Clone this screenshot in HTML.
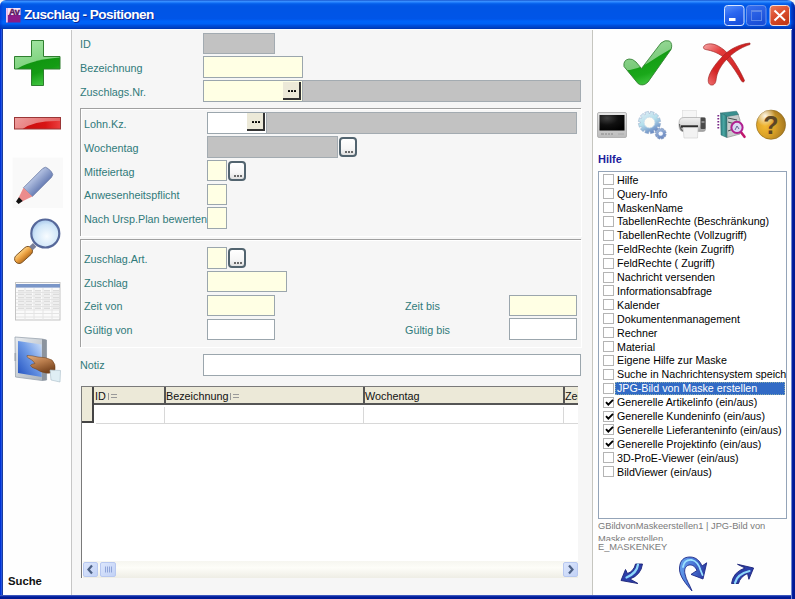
<!DOCTYPE html>
<html><head><meta charset="utf-8">
<style>
*{box-sizing:border-box}
html,body{margin:0;padding:0;width:795px;height:599px;overflow:hidden;background:#f4f4f4}
body{position:relative;font-family:"Liberation Sans",sans-serif;font-size:11px}
.a{position:absolute}
#title{left:0;top:0;width:795px;height:29px;border-radius:6px 8px 0 0;overflow:hidden;
background:linear-gradient(to bottom,#0a3fbf 0px,#3d95ff 1px,#2e86ff 2px,#0f6ef4 3px,#045de8 4px,#0055e5 6px,#0055e8 19px,#0063fa 21px,#0062f6 24px,#0050e0 25px,#0046cc 27px,#0036b0 29px)}
#frame{left:0;top:29px;width:795px;height:570px;background:linear-gradient(to right,#0032d6 0,#0032d6 1px,#2454e0 1px,#2454e0 2px,#1a3c9c 2px,#1a3c9c 3px,transparent 3px)}
#client{left:3px;top:29px;width:789px;height:566px;background:#f6f6f6}
.lab{position:absolute;color:#307a7a;font-size:10.8px;line-height:12px;white-space:nowrap}
.inp{position:absolute;border:1px solid #9ba6ad;background:#ffffe4}
.gray{background:#c2c2c2;border-color:#a3abb1}
.white{background:#fff}
.btn1{position:absolute;width:18px;height:18px;background:#ece9d8;border-right:2px solid #333;border-bottom:2px solid #333}
.btn1 i{position:absolute;top:7.5px;width:2.4px;height:2.4px;background:#000;border-radius:0.5px}
.btn1 i:nth-child(1){left:4.5px}.btn1 i:nth-child(2){left:7.7px}.btn1 i:nth-child(3){left:10.9px}
.btn2{position:absolute;width:18px;height:20px;border:2px solid #52646f;border-radius:4px;background:linear-gradient(#fff,#f6f6f6 60%,#e0e0e0)}
.btn2 i{position:absolute;top:11.5px;width:2px;height:2px;background:#6a6a6a}
.btn2 i:nth-child(1){left:4px}.btn2 i:nth-child(2){left:7px}.btn2 i:nth-child(3){left:10px}
.grp{position:absolute;border-top:1px solid #a0a0a0;border-left:1px solid #a0a0a0;box-shadow:inset 1px 1px 0 #fff, 1px 1px 0 #fff}
.li{position:absolute;left:3px;width:186px;height:13px;font-size:10.7px;line-height:13px;white-space:nowrap;color:#000}
.li span{position:absolute;left:13px;top:0;padding:0 2px 0 2px}
.li .cb{position:absolute;left:0.5px;top:0.5px;width:11px;height:11px;border:1px solid #b4b4b4;background:#fff}
.li .cb svg{position:absolute;left:1px;top:0px}
.li.sel span{background:#316ac5;color:#fff;width:170px;outline:1px dotted #8aa;outline-offset:-1px}
.gh{position:absolute;top:2px;font-size:10.8px;line-height:14px;color:#111;white-space:nowrap}
.gh .srt{display:inline-block;width:9px;height:7px;margin-left:2px;border-left:1px solid #999;position:relative;top:0px;background:linear-gradient(#999,#999) 2px 1px/6px 1px no-repeat,linear-gradient(#999,#999) 2px 4px/6px 1px no-repeat}
.sbb{position:absolute;width:15px;height:15px;border-radius:2px;border:1px solid #b8c8f0;background:linear-gradient(135deg,#dce6fc,#c2d2f6)}
.sbb svg{position:absolute;left:-1px;top:-1px}
</style></head><body>
<div id="title" class="a"><div class="a" style="right:0;top:0;width:4px;height:29px;background:linear-gradient(to right,rgba(0,30,160,0.3),rgba(0,24,150,0.85))"></div><div class="a" style="left:0;top:0;width:3px;height:29px;background:linear-gradient(to right,rgba(0,40,200,0.5),rgba(0,40,200,0))"></div></div>

<!-- title bar contents -->
<svg class="a" style="left:0;top:0" width="795" height="29" viewBox="0 0 795 29">
<defs>
<linearGradient id="gMin" x1="0" y1="0" x2="0.4" y2="1"><stop offset="0" stop-color="#5a92fc"/><stop offset="0.5" stop-color="#2a66f0"/><stop offset="1" stop-color="#1a52de"/></linearGradient>
<linearGradient id="gMax" x1="0" y1="0" x2="0.4" y2="1"><stop offset="0" stop-color="#3870f0"/><stop offset="1" stop-color="#1a4fd8"/></linearGradient>
<linearGradient id="gCls" x1="0" y1="0" x2="0.5" y2="1"><stop offset="0" stop-color="#ec7a58"/><stop offset="0.5" stop-color="#dc5030"/><stop offset="1" stop-color="#c43a18"/></linearGradient>
</defs>
<rect x="6" y="8" width="14.5" height="14.5" fill="#8a1c88"/>
<rect x="7.5" y="8" width="13" height="7" fill="#f8e4f8"/>
<rect x="6" y="8" width="1.8" height="14.5" fill="#f0c8f0"/>
<text x="14.3" y="14.6" text-anchor="middle" font-family="Liberation Sans" font-weight="bold" font-size="9" letter-spacing="-0.2" fill="#5a1860" stroke="#5a1860" stroke-width="0.45">Av</text>
<rect x="724.5" y="5.5" width="19.5" height="20" rx="3" fill="url(#gMin)" stroke="#d8e6ff" stroke-width="1"/>
<rect x="729" y="18" width="6.5" height="3" fill="#fff"/>
<rect x="746.5" y="5.5" width="19.5" height="20" rx="3" fill="url(#gMax)" stroke="#6a94ee" stroke-width="1"/>
<rect x="751.5" y="10.5" width="10" height="10" fill="none" stroke="#5e88e8" stroke-width="1"/>
<rect x="751.5" y="10" width="10" height="2" fill="#5e88e8"/>
<rect x="770" y="5.5" width="19.5" height="20" rx="3" fill="url(#gCls)" stroke="#f0e0dc" stroke-width="1"/>
<path d="M774.5,10.5 L785,20.5 M785,10.5 L774.5,20.5" stroke="#fff" stroke-width="2"/>
</svg>
<div class="a" style="left:24px;top:7px;font-weight:bold;font-size:13.6px;line-height:16px;letter-spacing:-0.55px;color:#fff;text-shadow:1px 1px 0 #0a2a9a;white-space:nowrap">Zuschlag - Positionen</div>
<div id="frame" class="a"></div>
<div id="client" class="a"></div>
<!-- left panel -->
<div class="a" style="left:3px;top:29px;width:789px;height:1px;background:#fcfdff;z-index:1"></div>
<div class="a" style="left:3px;top:29px;width:68px;height:566px;background:#fefefe"></div>
<div class="a" style="left:71px;top:29px;width:1px;height:566px;background:#c6c6c6"></div>
<!-- right panel -->
<div class="a" style="left:593px;top:29px;width:199px;height:566px;background:#fefefe"></div>
<div class="a" style="left:592px;top:29px;width:1px;height:566px;background:#c6c6c0"></div>
<!-- bottom frame -->
<div class="a" style="left:0;top:595px;width:795px;height:4px;background:linear-gradient(to bottom,#5a74c8 0,#1a36b0 1px,#001c98 2px,#001890 4px)"></div>
<div class="a" style="left:791px;top:29px;width:4px;height:570px;background:linear-gradient(to right,#7088d0 0,#7088d0 1px,#0828a8 1px,#001a98 2px,#001890 4px)"></div>


<!-- labels -->
<div class="lab" style="left:80px;top:38px">ID</div>
<div class="lab" style="left:80px;top:62px">Bezeichnung</div>
<div class="lab" style="left:80px;top:86px">Zuschlags.Nr.</div>

<div class="inp gray" style="left:203px;top:33px;width:72px;height:21px"></div>
<div class="inp" style="left:203px;top:56px;width:100px;height:22px"></div>
<div class="inp" style="left:203px;top:80px;width:100px;height:22px"></div>
<div class="inp gray" style="left:302px;top:80px;width:279px;height:22px"></div>
<div class="btn1" style="left:283px;top:82px"><i></i><i></i><i></i></div>

<!-- group 1 -->
<div class="grp" style="left:80px;top:108px;width:501px;height:128px"></div>
<div class="lab" style="left:84px;top:118px">Lohn.Kz.</div>
<div class="lab" style="left:84px;top:142px">Wochentag</div>
<div class="lab" style="left:84px;top:166px">Mitfeiertag</div>
<div class="lab" style="left:84px;top:189px">Anwesenheitspflicht</div>
<div class="lab" style="left:84px;top:213px">Nach Ursp.Plan bewerten</div>

<div class="inp white" style="left:207px;top:112px;width:60px;height:22px"></div>
<div class="btn1" style="left:247px;top:113px"><i></i><i></i><i></i></div>
<div class="inp gray" style="left:266px;top:112px;width:311px;height:22px"></div>
<div class="inp gray" style="left:207px;top:136px;width:131px;height:22px"></div>
<div class="btn2" style="left:339px;top:137px"><i></i><i></i><i></i></div>
<div class="inp" style="left:207px;top:160px;width:20px;height:21px"></div>
<div class="btn2" style="left:228px;top:161px"><i></i><i></i><i></i></div>
<div class="inp" style="left:207px;top:184px;width:20px;height:21px"></div>
<div class="inp" style="left:207px;top:207px;width:20px;height:22px"></div>

<!-- group 2 -->
<div class="grp" style="left:80px;top:239px;width:501px;height:108px"></div>
<div class="lab" style="left:84px;top:253px">Zuschlag.Art.</div>
<div class="lab" style="left:84px;top:277px">Zuschlag</div>
<div class="lab" style="left:84px;top:300px">Zeit von</div>
<div class="lab" style="left:84px;top:324px">G&uuml;ltig von</div>
<div class="lab" style="left:405px;top:300px">Zeit bis</div>
<div class="lab" style="left:405px;top:324px">G&uuml;ltig bis</div>

<div class="inp" style="left:207px;top:247px;width:20px;height:22px"></div>
<div class="btn2" style="left:228px;top:248px"><i></i><i></i><i></i></div>
<div class="inp" style="left:207px;top:271px;width:80px;height:21px"></div>
<div class="inp" style="left:207px;top:295px;width:68px;height:21px"></div>
<div class="inp white" style="left:207px;top:319px;width:68px;height:21px"></div>
<div class="inp" style="left:509px;top:295px;width:68px;height:21px"></div>
<div class="inp white" style="left:509px;top:318px;width:68px;height:22px"></div>

<div class="lab" style="left:80px;top:359px">Notiz</div>
<div class="inp white" style="left:203px;top:354px;width:378px;height:22px"></div>


<!-- grid -->
<div class="a" style="left:81px;top:386px;width:497px;height:192px;background:#fff;border-left:1px solid #7a7a7a;border-top:1px solid #7a7a7a;overflow:hidden">
 <div class="a" style="left:0;top:0;width:500px;height:18px;background:#ece9d8;border-bottom:2px solid #555"></div>
 <div class="a" style="left:0;top:0;width:12px;height:36px;background:#ece9d8;border-right:2px solid #444;border-bottom:2px solid #444"></div>
 <div class="a" style="left:82px;top:0;width:2px;height:18px;background:#555"></div>
 <div class="a" style="left:281px;top:0;width:2px;height:18px;background:#555"></div>
 <div class="a" style="left:481px;top:0;width:2px;height:18px;background:#555"></div>
 <div class="gh" style="left:13px">ID<i class="srt"></i></div>
 <div class="gh" style="left:84px">Bezeichnung<i class="srt"></i></div>
 <div class="gh" style="left:283px">Wochentag</div>
 <div class="gh" style="left:483px">Zeit</div>
 <div class="a" style="left:14px;top:36px;width:490px;height:1px;background:#d8d8d8"></div>
 <div class="a" style="left:82px;top:20px;width:1px;height:16px;background:#d8d8d8"></div>
 <div class="a" style="left:281px;top:20px;width:1px;height:16px;background:#d8d8d8"></div>
 <div class="a" style="left:481px;top:20px;width:1px;height:16px;background:#d8d8d8"></div>
 <!-- hscroll -->
 <div class="a" style="left:1px;top:174px;width:497px;height:17px;background:linear-gradient(#f6f6f0,#fdfdf8 40%,#eeede5)"></div>
 <div class="sbb" style="left:1px;top:175px"><svg width="15" height="15" viewBox="0 0 15 15"><path d="M9,3.5 L5.5,7.5 L9,11.5" fill="none" stroke="#4d6185" stroke-width="2.2"/></svg></div>
 <div class="sbb" style="left:18px;top:175px;width:16px"><svg width="16" height="15" viewBox="0 0 16 15"><path d="M5.5,4.5V10.5M7.5,4.5V10.5M9.5,4.5V10.5M11.5,4.5V10.5" stroke="#8fa4d8" stroke-width="1"/></svg></div>
 <div class="sbb" style="left:481px;top:175px"><svg width="15" height="15" viewBox="0 0 15 15"><path d="M6,3.5 L9.5,7.5 L6,11.5" fill="none" stroke="#4d6185" stroke-width="2.2"/></svg></div>
</div>
<!-- left icons -->
<svg class="a" style="left:0;top:0" width="72" height="599" viewBox="0 0 72 599">
<defs>
<linearGradient id="gP1" x1="0" y1="0" x2="1" y2="1"><stop offset="0" stop-color="#a6e6a6"/><stop offset="0.45" stop-color="#5cc65c"/><stop offset="0.5" stop-color="#189a18"/><stop offset="1" stop-color="#2ec02e"/></linearGradient>
<linearGradient id="gM1" x1="0" y1="0" x2="1" y2="1"><stop offset="0" stop-color="#f0a0a0"/><stop offset="0.4" stop-color="#e06868"/><stop offset="0.5" stop-color="#d41010"/><stop offset="1" stop-color="#e83030"/></linearGradient>
<linearGradient id="gPen" x1="0" y1="0" x2="0" y2="1"><stop offset="0" stop-color="#b4c2e2"/><stop offset="1" stop-color="#6a7fb6"/></linearGradient>
<radialGradient id="gLens" cx="0.4" cy="0.35" r="0.7"><stop offset="0" stop-color="#f4faff"/><stop offset="0.6" stop-color="#c0dcf4"/><stop offset="1" stop-color="#90b8e0"/></radialGradient>
<linearGradient id="gHand" x1="0" y1="0" x2="0" y2="1"><stop offset="0" stop-color="#f8c060"/><stop offset="1" stop-color="#c07828"/></linearGradient>
<linearGradient id="gScr" x1="0" y1="0" x2="1" y2="1"><stop offset="0" stop-color="#9ec0f0"/><stop offset="0.5" stop-color="#4c86e0"/><stop offset="1" stop-color="#1848c0"/></linearGradient>
</defs>
<!-- plus -->
<clipPath id="cpP"><path d="M31.5,40.5 h12 v16 h16.5 v12.5 h-16.5 v16.5 h-12 v-16.5 h-17 v-12.5 h17 z"/></clipPath>
<clipPath id="cpM"><rect x="14.5" y="117.5" width="46" height="11.5"/></clipPath>
<linearGradient id="gPt" x1="0" y1="0" x2="0.3" y2="1"><stop offset="0" stop-color="#a8e8a8"/><stop offset="1" stop-color="#62c462"/></linearGradient>
<linearGradient id="gPb" x1="0" y1="0" x2="0.6" y2="1"><stop offset="0" stop-color="#0c8e0c"/><stop offset="0.6" stop-color="#149c14"/><stop offset="1" stop-color="#48cc48"/></linearGradient>
<linearGradient id="gMt" x1="0" y1="0" x2="1" y2="0.3"><stop offset="0" stop-color="#eea0a0"/><stop offset="1" stop-color="#e46464"/></linearGradient>
<linearGradient id="gMb" x1="0" y1="0" x2="1" y2="0"><stop offset="0" stop-color="#c80c0c"/><stop offset="0.6" stop-color="#d81414"/><stop offset="1" stop-color="#ec4040"/></linearGradient>
<g clip-path="url(#cpP)">
<rect x="14" y="40" width="47" height="47" fill="url(#gPt)"/>
<path d="M14,71 Q28,60 61,57.5 L61,87 L14,87 Z" fill="url(#gPb)"/>
</g>
<path d="M31.5,40.5 h12 v16 h16.5 v12.5 h-16.5 v16.5 h-12 v-16.5 h-17 v-12.5 h17 z" fill="none" stroke="#2f7f2f" stroke-width="1"/>
<!-- minus -->
<g clip-path="url(#cpM)">
<rect x="14" y="117" width="47" height="12" fill="url(#gMt)"/>
<path d="M22,129.5 Q34,120 61,121 L61,130 Z" fill="url(#gMb)"/>
</g>
<rect x="14.5" y="117.5" width="46" height="11.5" fill="none" stroke="#9a3636" stroke-width="1"/>
<!-- pencil -->
<rect x="12.5" y="157.5" width="50.5" height="50.5" fill="#f9f9f9"/>
<g transform="translate(18,202) rotate(-45)">
<path d="M14,-6.2 L41,-6.2 Q45,-6.2 45,-2 L45,2 Q45,6.2 41,6.2 L14,6.2 Z" fill="url(#gPen)" stroke="#7080a8" stroke-width="0.8"/>
<path d="M1,-1.8 L14,-6.2 L14,6.2 L1,1.8 Z" fill="#ec8c8c"/>
<path d="M-1,-1.8 L4,-2.6 L4,2.6 L-1,1.8 Z" fill="#111"/>
</g>
<!-- magnifier -->
<linearGradient id="gHand2" x1="0" y1="0" x2="0" y2="1"><stop offset="0" stop-color="#fcd080"/><stop offset="0.5" stop-color="#eba040"/><stop offset="1" stop-color="#b87020"/></linearGradient>
<radialGradient id="gLens2" cx="0.55" cy="0.6" r="0.6"><stop offset="0" stop-color="#f8fcff"/><stop offset="0.7" stop-color="#d0e6f8"/><stop offset="1" stop-color="#a8c8ec"/></radialGradient>
<g transform="translate(24.3,254.3) rotate(-42)"><rect x="-11.5" y="-4.6" width="21" height="9.2" rx="4.6" fill="url(#gHand2)" stroke="#7a5020" stroke-width="0.9"/><rect x="9" y="-2.5" width="5" height="5" fill="#7a7f98"/></g>
<circle cx="45.3" cy="233.5" r="14" fill="url(#gLens2)" stroke="#56689a" stroke-width="2.2"/>
<!-- table -->
<rect x="15.5" y="282.5" width="44.5" height="37.5" fill="#fafafa" stroke="#c4c4c4" stroke-width="1"/>
<rect x="16" y="284" width="44" height="3.6" fill="#7a96c8"/>
<g fill="#dcdcdc">
<path d="M18,290h6v1.4h-6zM26,290h6v1.4h-6zM35,290h6v1.4h-6zM44,290h6v1.4h-6zM53,290h6v1.4h-6z"/>
<path d="M18,293.5h6v1.4h-6zM26,293.5h6v1.4h-6zM35,293.5h6v1.4h-6zM44,293.5h6v1.4h-6zM53,293.5h6v1.4h-6z"/>
<path d="M18,297h6v1.4h-6zM26,297h6v1.4h-6zM35,297h6v1.4h-6zM44,297h6v1.4h-6zM53,297h6v1.4h-6z"/>
<path d="M18,300.5h6v1.4h-6zM26,300.5h6v1.4h-6zM35,300.5h6v1.4h-6zM44,300.5h6v1.4h-6zM53,300.5h6v1.4h-6z"/>
<path d="M18,304h6v1.4h-6zM26,304h6v1.4h-6zM35,304h6v1.4h-6zM44,304h6v1.4h-6zM53,304h6v1.4h-6z"/>
<path d="M18,307.5h6v1.4h-6zM26,307.5h6v1.4h-6zM35,307.5h6v1.4h-6zM44,307.5h6v1.4h-6zM53,307.5h6v1.4h-6z"/>
</g>
<g stroke="#e4e4e4" stroke-width="1" fill="none">
<path d="M16,292.5 H60 M16,296 H60 M16,299.5 H60 M16,303 H60 M16,306.5 H60 M16,310 H60 M16,313.5 H60 M16,317 H60"/>
<path d="M25,288 V320 M34,288 V320 M43,288 V320 M52,288 V320"/>
</g>
<!-- touch screen -->
<linearGradient id="gFrame" x1="0" y1="0" x2="1" y2="1"><stop offset="0" stop-color="#e8ecf0"/><stop offset="1" stop-color="#a8b0b8"/></linearGradient>
<linearGradient id="gScr2" x1="1" y1="0" x2="0" y2="1"><stop offset="0" stop-color="#d0e2fa"/><stop offset="0.45" stop-color="#6e9ae6"/><stop offset="1" stop-color="#2050c0"/></linearGradient>
<linearGradient id="gSkin" x1="0" y1="0" x2="0.5" y2="1"><stop offset="0" stop-color="#e4b080"/><stop offset="0.5" stop-color="#b87c4c"/><stop offset="1" stop-color="#7a4620"/></linearGradient>
<path d="M15,337 L42,339 L46.5,340 L46.6,380 L42,380.5 L15.5,377 Z" fill="url(#gFrame)" stroke="#9aa4b0" stroke-width="0.8"/>
<path d="M42,339 L46.5,340 L46.6,380 L42,380.5 Z" fill="#8c949e"/>
<rect x="14.5" y="353" width="1.6" height="8" fill="#a0a8b0"/>
<path d="M18,341 L41.6,344.5 L41.6,377 L18,373 Z" fill="url(#gScr2)"/>
<path d="M27,355.5 Q32,355.5 38,357 Q46,357 52,360 Q56,364 55,370 Q52,374 46,373 Q40,372 36,369 Q31,367.5 30.5,365.5 Q31,364 35,363.5 Q33,360 28.5,358 Q26.5,357 27,355.5 Z" fill="url(#gSkin)" stroke="#6a3c18" stroke-width="0.5"/>
<path d="M50,370 L60.5,370.5 L60,382 L51,380 Z" fill="#dfeef4" stroke="#a8bcc8" stroke-width="0.6"/>
</svg>
<div class="a" style="left:8px;top:575px;font-weight:bold;font-size:11.3px;line-height:12px;color:#111">Suche</div>

<!-- right panel -->
<div class="a" style="left:598px;top:153px;font-weight:bold;font-size:11px;line-height:12px;color:#1c1c9c">Hilfe</div>
<div class="a" style="left:598px;top:171px;width:189px;height:348px;border:1px solid #94a4b8;background:#fff;overflow:hidden">
<div class="li" style="top:1.7px"><b class="cb"></b><span>Hilfe</span></div>
<div class="li" style="top:15.6px"><b class="cb"></b><span>Query-Info</span></div>
<div class="li" style="top:29.5px"><b class="cb"></b><span>MaskenName</span></div>
<div class="li" style="top:43.4px"><b class="cb"></b><span>TabellenRechte (Beschr&auml;nkung)</span></div>
<div class="li" style="top:57.3px"><b class="cb"></b><span>TabellenRechte (Vollzugriff)</span></div>
<div class="li" style="top:71.2px"><b class="cb"></b><span>FeldRechte (kein Zugriff)</span></div>
<div class="li" style="top:85.1px"><b class="cb"></b><span>FeldRechte ( Zugriff)</span></div>
<div class="li" style="top:99.0px"><b class="cb"></b><span>Nachricht versenden</span></div>
<div class="li" style="top:112.9px"><b class="cb"></b><span>Informationsabfrage</span></div>
<div class="li" style="top:126.8px"><b class="cb"></b><span>Kalender</span></div>
<div class="li" style="top:140.7px"><b class="cb"></b><span>Dokumentenmanagement</span></div>
<div class="li" style="top:154.6px"><b class="cb"></b><span>Rechner</span></div>
<div class="li" style="top:168.5px"><b class="cb"></b><span>Material</span></div>
<div class="li" style="top:182.4px"><b class="cb"></b><span>Eigene Hilfe zur Maske</span></div>
<div class="li" style="top:196.3px"><b class="cb"></b><span>Suche in Nachrichtensystem speichern</span></div>
<div class="li sel" style="top:210.2px"><b class="cb"></b><span>JPG-Bild von Maske erstellen</span></div>
<div class="li" style="top:224.1px"><b class="cb"><svg width="9" height="9" viewBox="0 0 9 9"><path d="M1,4.2 L3.3,6.6 L8,1.8" fill="none" stroke="#000" stroke-width="1.9"/></svg></b><span>Generelle Artikelinfo (ein/aus)</span></div>
<div class="li" style="top:238.0px"><b class="cb"><svg width="9" height="9" viewBox="0 0 9 9"><path d="M1,4.2 L3.3,6.6 L8,1.8" fill="none" stroke="#000" stroke-width="1.9"/></svg></b><span>Generelle Kundeninfo (ein/aus)</span></div>
<div class="li" style="top:251.9px"><b class="cb"><svg width="9" height="9" viewBox="0 0 9 9"><path d="M1,4.2 L3.3,6.6 L8,1.8" fill="none" stroke="#000" stroke-width="1.9"/></svg></b><span>Generelle Lieferanteninfo (ein/aus)</span></div>
<div class="li" style="top:265.8px"><b class="cb"><svg width="9" height="9" viewBox="0 0 9 9"><path d="M1,4.2 L3.3,6.6 L8,1.8" fill="none" stroke="#000" stroke-width="1.9"/></svg></b><span>Generelle Projektinfo (ein/aus)</span></div>
<div class="li" style="top:279.7px"><b class="cb"></b><span>3D-ProE-Viewer (ein/aus)</span></div>
<div class="li" style="top:293.6px"><b class="cb"></b><span>BildViewer (ein/aus)</span></div>
</div>
<div class="a" style="left:598px;top:520px;width:190px;height:21px;overflow:hidden;font-size:9.3px;line-height:13px;color:#7a7a7a">GBildvonMaskeerstellen1 | JPG-Bild von Maske erstellen</div>
<div class="a" style="left:598px;top:541px;font-size:9.3px;line-height:12px;color:#7a7a7a">E_MASKENKEY</div>

<!-- right icons -->
<svg class="a" style="left:593px;top:29px" width="199" height="566" viewBox="593 29 199 566">
<defs>
<linearGradient id="gCk" x1="0" y1="0" x2="0.3" y2="1"><stop offset="0" stop-color="#a8e0a8"/><stop offset="1" stop-color="#5cbc5c"/></linearGradient>
<linearGradient id="gCkb" x1="0" y1="0" x2="0.4" y2="1"><stop offset="0" stop-color="#0c8c0c"/><stop offset="0.7" stop-color="#1aa81a"/><stop offset="1" stop-color="#50d050"/></linearGradient>
<linearGradient id="gX" x1="0" y1="0" x2="1" y2="1"><stop offset="0" stop-color="#f4a0a0"/><stop offset="0.35" stop-color="#e03030"/><stop offset="1" stop-color="#c81818"/></linearGradient>
<clipPath id="cpCk"><path id="ckp" d="M624,66.5 Q623,60 629,59 Q632.5,58.5 636,62 L641.5,68.5 L661,43 Q665,39.5 669.5,41 Q673,44 671,49.5 L648,82 Q643,87 638,83.5 Z"/></clipPath>
<linearGradient id="gMon" x1="0" y1="0" x2="0" y2="1"><stop offset="0" stop-color="#e6e6e6"/><stop offset="1" stop-color="#bcbcbc"/></linearGradient>
<radialGradient id="gScrM" cx="0.3" cy="0.2" r="0.9"><stop offset="0" stop-color="#404040"/><stop offset="0.5" stop-color="#101010"/><stop offset="1" stop-color="#000"/></radialGradient>
<linearGradient id="gGear" x1="0" y1="0" x2="1" y2="1"><stop offset="0" stop-color="#e4f4fc"/><stop offset="0.5" stop-color="#a8d4f0"/><stop offset="1" stop-color="#6a92cc"/></linearGradient>
<radialGradient id="gHelp" cx="0.3" cy="0.55" r="0.8" fx="0.3" fy="0.55"><stop offset="0" stop-color="#f4b830"/><stop offset="0.45" stop-color="#d8a028"/><stop offset="0.85" stop-color="#a87a20"/><stop offset="1" stop-color="#80601c"/></radialGradient><radialGradient id="gHelpHi" cx="0.3" cy="0.2" r="0.35"><stop offset="0" stop-color="#fff" stop-opacity="0.9"/><stop offset="1" stop-color="#fff" stop-opacity="0"/></radialGradient>
<linearGradient id="gPr" x1="0" y1="0" x2="0" y2="1"><stop offset="0" stop-color="#f4f4f4"/><stop offset="1" stop-color="#a8a8a8"/></linearGradient>
<linearGradient id="gArr" x1="0" y1="0" x2="1" y2="1"><stop offset="0" stop-color="#a8e4fc"/><stop offset="1" stop-color="#58a8ec"/></linearGradient>
</defs>
<!-- check -->
<g clip-path="url(#cpCk)">
<rect x="620" y="38" width="55" height="50" fill="url(#gCk)"/>
<path d="M620,70.5 Q636,71 648,63 Q660,55 676,46 L676,90 L620,90 Z" fill="url(#gCkb)"/>
</g>
<use href="#ckp" fill="none" stroke="#3a863a" stroke-width="0.9"/>
<!-- X -->
<linearGradient id="gX2" x1="0" y1="0" x2="1" y2="1"><stop offset="0" stop-color="#f6a8a8"/><stop offset="0.3" stop-color="#e43c3c"/><stop offset="1" stop-color="#cc1c1c"/></linearGradient>
<linearGradient id="gX3" x1="1" y1="0" x2="0" y2="1"><stop offset="0" stop-color="#d02020"/><stop offset="0.75" stop-color="#d42424"/><stop offset="1" stop-color="#f07070"/></linearGradient>
<path d="M703.5,47 C705,43.5 711,43 716,45 C724,48.5 730,55 735,63 C739,69 742,75 744.5,80.5 C744,82.5 742.5,82.5 741.5,81 C737,73 733,67 728,61 C722,55 715,51.5 708,50 C705,49.5 703,49 703.5,47 Z" fill="url(#gX2)" stroke="#a02828" stroke-width="0.7"/>
<path d="M750,43 C740,44 730,49 724,55 C716,63 710,71 708.5,78 C707.5,83 709.5,85.5 712.5,85 C715.5,84.5 716,81 716.5,77 C718,70 722,64 728,58 C736,50 744,46.5 750,44.5 Z" fill="url(#gX3)" stroke="#a02828" stroke-width="0.7"/>
<!-- monitor -->
<rect x="597.5" y="112.5" width="29" height="25" rx="1.5" fill="url(#gMon)" stroke="#a8a8a8" stroke-width="0.8"/>
<rect x="599.5" y="115" width="25" height="15.5" fill="url(#gScrM)"/>
<path d="M601,134h3M605,134h2M608,134h2M611,134h2" stroke="#888" stroke-width="1"/>
<path d="M618,134h6" stroke="#aaa" stroke-width="1"/>
<!-- gears -->
<linearGradient id="gGear2" x1="0" y1="0" x2="0.5" y2="1"><stop offset="0" stop-color="#e8eef6"/><stop offset="0.55" stop-color="#b4e0ec"/><stop offset="1" stop-color="#6c8cc4"/></linearGradient>
<linearGradient id="gGear3" x1="0" y1="0" x2="0.5" y2="1"><stop offset="0" stop-color="#a8c0e0"/><stop offset="1" stop-color="#6a88c0"/></linearGradient>
<path d="M658.50,122.50 L658.49,122.97 L660.66,123.50 L659.66,127.22 L657.52,126.59 L657.29,127.00 L657.05,127.40 L658.66,128.94 L655.94,131.66 L654.40,130.05 L654.00,130.29 L653.59,130.52 L654.22,132.66 L650.50,133.66 L649.97,131.49 L649.50,131.50 L649.03,131.49 L648.50,133.66 L644.78,132.66 L645.41,130.52 L645.00,130.29 L644.60,130.05 L643.06,131.66 L640.34,128.94 L641.95,127.40 L641.71,127.00 L641.48,126.59 L639.34,127.22 L638.34,123.50 L640.51,122.97 L640.50,122.50 L640.51,122.03 L638.34,121.50 L639.34,117.78 L641.48,118.41 L641.71,118.00 L641.95,117.60 L640.34,116.06 L643.06,113.34 L644.60,114.95 L645.00,114.71 L645.41,114.48 L644.78,112.34 L648.50,111.34 L649.03,113.51 L649.50,113.50 L649.97,113.51 L650.50,111.34 L654.22,112.34 L653.59,114.48 L654.00,114.71 L654.40,114.95 L655.94,113.34 L658.66,116.06 L657.05,117.60 L657.29,118.00 L657.52,118.41 L659.66,117.78 L660.66,121.50 L658.49,122.03 Z" fill="url(#gGear2)" stroke="#90a8c8" stroke-width="0.5"/>
<circle cx="649.5" cy="122.5" r="5.4" fill="#fefcf4" stroke="#c8dcec" stroke-width="0.8"/>
<path d="M665.00,133.60 L664.99,133.94 L666.25,134.35 L665.15,137.00 L663.97,136.39 L663.74,136.64 L663.49,136.87 L664.10,138.05 L661.45,139.15 L661.04,137.89 L660.70,137.90 L660.36,137.89 L659.95,139.15 L657.30,138.05 L657.91,136.87 L657.66,136.64 L657.43,136.39 L656.25,137.00 L655.15,134.35 L656.41,133.94 L656.40,133.60 L656.41,133.26 L655.15,132.85 L656.25,130.20 L657.43,130.81 L657.66,130.56 L657.91,130.33 L657.30,129.15 L659.95,128.05 L660.36,129.31 L660.70,129.30 L661.04,129.31 L661.45,128.05 L664.10,129.15 L663.49,130.33 L663.74,130.56 L663.97,130.81 L665.15,130.20 L666.25,132.85 L664.99,133.26 Z" fill="url(#gGear3)" stroke="#7890b8" stroke-width="0.5"/>
<circle cx="660.7" cy="133.6" r="2.2" fill="#f4f8ff"/>
<!-- printer -->
<linearGradient id="gPr2" x1="0" y1="0" x2="0" y2="1"><stop offset="0" stop-color="#f0f0f0"/><stop offset="0.5" stop-color="#dcdcdc"/><stop offset="1" stop-color="#9a9a9a"/></linearGradient>
<rect x="682.5" y="110.5" width="14" height="8" fill="#f6f6f6" stroke="#dadada" stroke-width="0.6"/>
<path d="M679,123 Q679,117.5 684,117.5 L702,117.5 Q705.5,117.5 705.5,120 L705.5,129 Q705.5,131.5 703,131.5 L684,131.5 Q679,131.5 679,126 Z" fill="url(#gPr2)" stroke="#9c9c9c" stroke-width="0.6"/>
<path d="M679.5,124 Q680,129 683,131" fill="none" stroke="#606060" stroke-width="1.2"/>
<rect x="700.5" y="117.5" width="5" height="11.5" rx="1" fill="#4a4a4a"/>
<rect x="701.5" y="121" width="3" height="2" fill="#8a8a8a"/>
<rect x="681" y="125.3" width="17" height="2.4" fill="#2c2c2c"/>
<path d="M683,127.6 L698,127.6 L697.5,138 L684,138 Z" fill="#f2f2f2" stroke="#cfcfcf" stroke-width="0.6"/>
<!-- binder -->
<linearGradient id="gBnd" x1="0" y1="0" x2="1" y2="0"><stop offset="0" stop-color="#2c7c80"/><stop offset="0.5" stop-color="#4aa8a4"/><stop offset="1" stop-color="#287070"/></linearGradient>
<path d="M726,115 L738,114 L740,120 L740,134 L727,137.5 Z" fill="#c8cccc" stroke="#7a8080" stroke-width="0.6"/>
<path d="M728,118 L737,120 M728,122 L735,124 M728,131 L736,128" stroke="#4a5050" stroke-width="1"/>
<path d="M720.5,113 L736.5,111.2 L738.5,114.5 L727,116.5 Z" fill="#3a9090" stroke="#2a6a6a" stroke-width="0.5"/>
<path d="M720.5,113 L727,116.5 L726.8,137.5 L721,135 Z" fill="url(#gBnd)" stroke="#2a6a6a" stroke-width="0.5"/>
<path d="M718.3,115v1.4M718.3,118v1.4M718.3,121v1.4M718.3,124v1.4M718.3,127v1.4" stroke="#7a2a88" stroke-width="1.8"/>
<path d="M740.5,131.5 L744.5,136.8" stroke="#c0186c" stroke-width="2.6" stroke-linecap="round"/>
<circle cx="737" cy="127.4" r="5.6" fill="#dcd8f4" stroke="#b02090" stroke-width="2"/>
<path d="M735,130 L737,126 L739,129" fill="none" stroke="#606890" stroke-width="1"/>
<!-- help -->
<circle cx="771" cy="124.7" r="14.6" fill="url(#gHelp)" stroke="#8a6418" stroke-width="0.6"/><circle cx="771" cy="124.7" r="14.6" fill="url(#gHelpHi)"/>
<text x="771" y="133.6" text-anchor="middle" font-family="Liberation Sans" font-weight="bold" font-size="25" fill="#5c4526">?</text>
<!-- arrows -->
<linearGradient id="gRot" x1="0" y1="0" x2="1" y2="0.3"><stop offset="0" stop-color="#6aa8f0"/><stop offset="0.5" stop-color="#4a78d8"/><stop offset="1" stop-color="#2a3aa0"/></linearGradient>
<path d="M692,591 C686,584 679,576 679.5,568 C680,560 684,557 690,557 C696,557 700,561 702,566 L706.7,562.8 L703,579 L691,574.4 L697,570.5 C695,566 692,564.5 689,565 C685,566 684,570 685,574 C686,580 690,585 692,591 Z" fill="url(#gRot)" stroke="#1e2a88" stroke-width="0.9" stroke-linejoin="round"/>
<path d="M683,567 C684,561 688,559.5 692,560 C696,561 699,565 700.5,570 L702.5,575" fill="none" stroke="#9ae2ff" stroke-width="1.8" stroke-linecap="round"/>
<!-- left arrow -->
<path d="M642.5,564 Q641,575 630,579 L637.9,583.5 L621,580.5 L625.5,569.5 L627.5,573.5 Q634,571 635.5,564 Z" fill="#2b3ea8" stroke="#1c2478" stroke-width="0.9" stroke-linejoin="round"/>
<path d="M638,564.5 Q637,573 626.5,577.5" fill="none" stroke="#8ed8fa" stroke-width="2.2" stroke-linecap="round"/>
<!-- right arrow -->
<path d="M731.5,583.5 Q733,572 745,568 L737.5,564.3 L753.6,568 L748.9,579.3 L747.5,573.5 Q740,577 738.5,583.5 Z" fill="#2b3ea8" stroke="#1c2478" stroke-width="0.9" stroke-linejoin="round"/>
<path d="M735,583 Q737,574 749.5,571" fill="none" stroke="#8ed8fa" stroke-width="2.2" stroke-linecap="round"/>
</svg>
</body></html>
